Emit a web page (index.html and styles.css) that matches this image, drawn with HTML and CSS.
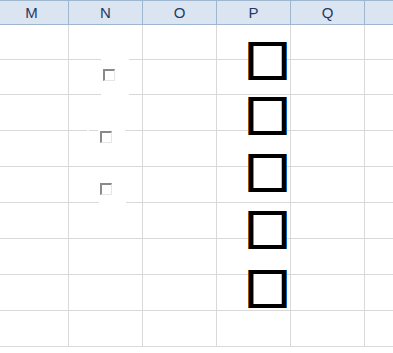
FILE: index.html
```html
<!DOCTYPE html>
<html>
<head>
<meta charset="utf-8">
<link rel="stylesheet" href="styles.css">
</head>
<body>
<div class="page">
  <div class="sheet">
    <div class="hrow">
      <div class="hcell">M</div><div class="hcell">N</div><div class="hcell">O</div><div class="hcell">P</div><div class="hcell">Q</div><div class="hcell"></div>
    </div>
    <div class="row r35"><div class="cell"></div><div class="cell"></div><div class="cell"></div><div class="cell"></div><div class="cell"></div><div class="cell"></div></div>
    <div class="row r35"><div class="cell"></div><div class="cell"></div><div class="cell"></div><div class="cell"></div><div class="cell"></div><div class="cell"></div></div>
    <div class="row"><div class="cell"></div><div class="cell"></div><div class="cell"></div><div class="cell"></div><div class="cell"></div><div class="cell"></div></div>
    <div class="row"><div class="cell"></div><div class="cell"></div><div class="cell"></div><div class="cell"></div><div class="cell"></div><div class="cell"></div></div>
    <div class="row"><div class="cell"></div><div class="cell"></div><div class="cell"></div><div class="cell"></div><div class="cell"></div><div class="cell"></div></div>
    <div class="row"><div class="cell"></div><div class="cell"></div><div class="cell"></div><div class="cell"></div><div class="cell"></div><div class="cell"></div></div>
    <div class="row"><div class="cell"></div><div class="cell"></div><div class="cell"></div><div class="cell"></div><div class="cell"></div><div class="cell"></div></div>
    <div class="row"><div class="cell"></div><div class="cell"></div><div class="cell"></div><div class="cell"></div><div class="cell"></div><div class="cell"></div></div>
    <div class="row"><div class="cell"></div><div class="cell"></div><div class="cell"></div><div class="cell"></div><div class="cell"></div><div class="cell"></div></div>
  </div>

  <div class="ctl ctl1"><span class="small-box"></span></div>
  <div class="ctl ctl2"><span class="small-box"></span></div>
  <div class="ctl ctl3"><span class="small-box"></span></div>
  <div class="ctl ctl4"></div>

  <div class="big-box b1"></div>
  <div class="big-box b2"></div>
  <div class="big-box b3"></div>
  <div class="big-box b4"></div>
  <div class="big-box b5"></div>
</div>
</body>
</html>
```
FILE: styles.css
```css
html, body {
  margin: 0;
  padding: 0;
  background: #ffffff;
  overflow: hidden;
}
.page {
  position: relative;
  width: 393px;
  height: 353px;
  overflow: hidden;
  font-family: "Liberation Sans", Arial, sans-serif;
}
.sheet {
  margin-left: -5px;
  display: flex;
  flex-direction: column;
}
.hrow {
  display: grid;
  grid-template-columns: repeat(6, 74px);
  height: 25px;
  box-sizing: border-box;
  border-top: 1px solid #9eb6ce;
  border-bottom: 1px solid #9eb6ce;
  background: #dbe5f1;
}
.hcell {
  box-sizing: border-box;
  border-right: 1px solid #9eb6ce;
  display: flex;
  align-items: center;
  justify-content: center;
  font-size: 15px;
  color: #1f3a62;
  padding-bottom: 1px;
}
.row {
  display: grid;
  grid-template-columns: repeat(6, 74px);
  height: 36px;
}
.row.r35 {
  height: 35px;
}
.cell {
  box-sizing: border-box;
  border-right: 1px solid #d9d9d9;
  border-bottom: 1px solid #d9d9d9;
}
.ctl {
  position: absolute;
  background: #ffffff;
}
.ctl1 { left: 101px; top: 57px; width: 28px; height: 39px; }
.ctl2 { left: 98px; top: 127px; width: 27px; height: 28px; }
.ctl3 { left: 99px; top: 176px; width: 27px; height: 28px; }
.ctl4 { left: 87px; top: 128px; width: 2px; height: 4px; }
.small-box {
  position: absolute;
  width: 12px;
  height: 12px;
  box-sizing: border-box;
  border-left: 2px solid #8a8a8a;
  border-top: 2px solid #8a8a8a;
  border-right: 1px solid #e6e6e6;
  border-bottom: 1px solid #e6e6e6;
  background: #ffffff;
}
.ctl1 .small-box { left: 2px; top: 12px; }
.ctl2 .small-box { left: 2px; top: 4px; }
.ctl3 .small-box { left: 1px; top: 7px; }
.big-box {
  position: absolute;
  left: 249px;
  width: 37px;
  height: 38px;
  box-sizing: border-box;
  border: 4px solid #000000;
  background: #ffffff;
  box-shadow: -1px 0 0 #a65500, 1px 0 0 #0060c8, inset 1px 0 0 #3a9bff, inset -1px 0 0 #ffb050;
}
.b1 { top: 42px; }
.b2 { top: 97px; }
.b3 { top: 154px; }
.b4 { top: 211px; }
.b5 { top: 270px; }
```
